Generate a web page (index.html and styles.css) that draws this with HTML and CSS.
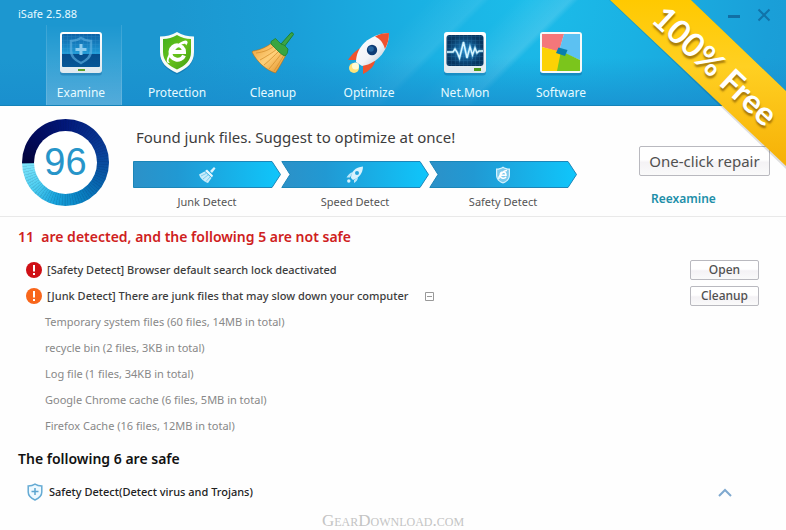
FILE: index.html
```html
<!DOCTYPE html>
<html lang="en">
<head>
<meta charset="utf-8">
<title>iSafe 2.5.88</title>
<link rel="stylesheet" href="styles.css">
</head>
<body>
<svg width="0" height="0" class="defs" aria-hidden="true">
  <defs>
    <linearGradient id="green" x1="0" y1="0" x2="1" y2="1"><stop offset="0" stop-color="#3fae1c"/><stop offset=".5" stop-color="#67c21a"/><stop offset="1" stop-color="#3f9d12"/></linearGradient>
    <linearGradient id="screen" x1="0" y1="0" x2="0" y2="1"><stop offset="0" stop-color="#0c62a6"/><stop offset=".6" stop-color="#1f9ad6"/><stop offset=".61" stop-color="#064d8c"/><stop offset="1" stop-color="#075796"/></linearGradient>
    <radialGradient id="monitor"><stop offset="0" stop-color="#1d7fc0"/><stop offset="1" stop-color="#06355f"/></radialGradient>
    <linearGradient id="frame" x1="0" y1="0" x2="0" y2="1"><stop offset="0" stop-color="#fff"/><stop offset="1" stop-color="#dfe9ef"/></linearGradient>
    <linearGradient id="straw" x1="0" y1="0" x2="1" y2="1"><stop offset="0" stop-color="#e89a30"/><stop offset=".5" stop-color="#ffd07a"/><stop offset="1" stop-color="#e08a1c"/></linearGradient>
    <linearGradient id="hull" x1="0" y1="0" x2="1" y2="1"><stop offset="0" stop-color="#fff"/><stop offset=".55" stop-color="#f2f4f8"/><stop offset="1" stop-color="#a9bccd"/></linearGradient>
    <linearGradient id="gold" x1="0" y1="0" x2="0" y2="1"><stop offset="0" stop-color="#ffc900"/><stop offset=".4" stop-color="#ffd022"/><stop offset="1" stop-color="#f6b006"/></linearGradient>
    <pattern id="grid" width="4" height="4" patternUnits="userSpaceOnUse"><path d="M0 .5H4M.5 0V4" stroke="#5ab4e6" stroke-width=".5" opacity=".5"/></pattern>
  </defs>
</svg>

<header class="header">
  <div class="titlebar">
    <h1 class="app-name">iSafe 2.5.88</h1>
    <div class="window-buttons">
      <button type="button" aria-label="Minimize"><svg width="14" height="14"><path d="M1 8.500H13" stroke="#116fa5" stroke-width="3"/></svg></button>
      <button type="button" aria-label="Close"><svg width="14" height="14"><path d="M1.500 1.500L12.500 12.500M12.500 1.500L1.500 12.500" stroke="#1173a9" stroke-width="2"/></svg></button>
    </div>
  </div>
  <nav class="tabs">
    <a href="#" class="tab active">
      <svg class="tab-icon" viewBox="0 0 44 44"><rect x="1" y="1.500" width="42" height="42" rx="3" fill="#0a5c96" opacity=".35"/><rect x="1" y="0" width="42" height="41" rx="3" fill="url(#frame)"/><rect x="3" y="2" width="38" height="33" rx="1" fill="url(#screen)"/><rect x="3" y="2" width="38" height="20" fill="url(#grid)" opacity=".5"/><path d="M22 6C25 8 28 9 32 9V18C32 25 28 28 22 31C16 28 12 25 12 18V9C16 9 19 8 22 6Z" fill="none" stroke="#5fb0e0" stroke-width="2.500" opacity=".65"/><path d="M22 12V23M16.500 17.500H27.500" stroke="#8bcbee" stroke-width="3"/><rect x="19" y="37" width="7" height="2" fill="#5aa02c"/></svg>
      <span>Examine</span></a>
    <a href="#" class="tab">
      <svg class="tab-icon" viewBox="0 0 44 44"><path d="M22 1.500C27 4.500 33 6 39 6V21C39 32 32 38 22 42.500C12 38 5 32 5 21V6C11 6 17 4.500 22 1.500Z" fill="#0a5c96" opacity=".4"/><path d="M22 0C27 3 33 4.500 39 4.500V20C39 31 32 36.500 22 41C12 36.500 5 31 5 20V4.500C11 4.500 17 3 22 0Z" fill="#f7fbf8"/><path d="M22 3C26.500 5.500 31 7 36 7V20C36 29 30 34 22 37.500C14 34 8 29 8 20V7C13 7 17.500 5.500 22 3Z" fill="url(#green)"/><path d="M15 20H29C29 11.500 16.500 11 15.500 19.500C14.500 29 26.500 30 29 23.500" fill="none" stroke="#fff" stroke-width="4"/><path d="M15 31C10 32 11 25 17 18S30 7 32 9C33.500 10.500 32 12 31 13.500C31 9.500 24 13 18.500 20S12.500 29 15 31Z" fill="#fff"/></svg>
      <span>Protection</span></a>
    <a href="#" class="tab">
      <svg class="tab-icon" viewBox="0 0 44 44"><path d="M30 12L40 .8Q42 0 42.500 2.500L33 15Z" fill="#3ba546" stroke="#1f8130" stroke-width="1"/><path d="M2 19C9 18 16 15 22 10L35 23C31 30 28 36 24.500 41C15 38 6 30 1 20Z" fill="url(#straw)" stroke="#b86f14" stroke-width=".6"/><path d="M5 21C13 20 18 18 23 14M9 28C16 24 21 21 26 17M13 33C19 28 23 24 28 19M18 37C23 31 27 26 31 21M23 39C27 33 30 28 33 23" fill="none" stroke="#d18c2a" stroke-width=".7"/><path d="M20 9.500L24.500 6.500Q28 10 30 12L33 13L37 17Q37 22 34 24Q31 23 28 20L20 12Z" fill="#39a541" stroke="#1f8130" stroke-width=".8"/></svg>
      <span>Cleanup</span></a>
    <a href="#" class="tab">
      <svg class="tab-icon" viewBox="0 0 44 44"><path d="M16 15C10 17 5 22 1 28L11 28Z" fill="#f0532e"/><path d="M16 32L28 28C28 34 22 39 16 42Z" fill="#f0532e"/><circle cx="7" cy="36" r="5" fill="#ffe37a"/><circle cx="8.500" cy="34" r="3.500" fill="#fffbd6"/><path d="M9 30C9 15 22 2 42 1C42 17 32 31 15 34Z" fill="url(#hull)"/><path d="M28 4.500C32 2 37 1 42 1C42 7 41 11 38 17C36 10 33 7 28 4.500Z" fill="#ee512f"/><circle cx="25" cy="18" r="5.200" fill="#0d3c76"/><circle cx="24" cy="17" r="2.800" fill="#2465a0"/></svg>
      <span>Optimize</span></a>
    <a href="#" class="tab">
      <svg class="tab-icon" viewBox="0 0 44 44"><rect x="1" y="1.500" width="42" height="42" rx="3" fill="#0a5c96" opacity=".35"/><rect x="1" y="0" width="42" height="41" rx="3" fill="url(#frame)"/><rect x="3.500" y="3" width="37" height="31" rx="3" fill="url(#monitor)"/><rect x="3.500" y="3" width="37" height="31" rx="3" fill="url(#grid)" opacity=".5"/><path d="M4 20H10L12 17L14 20L16.500 26L20.500 10L24 26L27 15L29.500 23L32 16L34 21L36 19H40" fill="none" stroke="#7fd9ff" stroke-width="3" opacity=".4"/><path d="M4 20H10L12 17L14 20L16.500 26L20.500 10L24 26L27 15L29.500 23L32 16L34 21L36 19H40" fill="none" stroke="#d8f6ff" stroke-width="1.500"/><rect x="31" y="36" width="7" height="3" fill="#4f9a1d"/></svg>
      <span>Net.Mon</span></a>
    <a href="#" class="tab">
      <svg class="tab-icon" viewBox="0 0 44 44"><rect x="1" y="1.500" width="42" height="42" rx="3" fill="#0a5c96" opacity=".4"/><rect x="1" y="0" width="42" height="41" rx="3" fill="#f6faf9"/><path d="M3 2H25L20 20L3 15Z" fill="#f4777a"/><path d="M25 2H41V28L20 19Z" fill="#5cc1f2"/><path d="M3 15L23 20L19 39H3Z" fill="#fcd205"/><path d="M41 28L22 19L18 39H41Z" fill="#7bc51c"/><path d="M19.500 15.500L28.500 18L26 24L17 21Z" fill="#087fae"/></svg>
      <span>Software</span></a>
  </nav>
</header>

<main>
  <section class="summary">
    <div class="score"><span>96</span></div>
    <div class="status">
      <h2 class="status-title">Found junk files. Suggest to optimize at once!</h2>
      <ol class="steps">
        <li><svg class="arrow" viewBox="0 0 148 27" preserveAspectRatio="none"><defs><linearGradient id="bar"><stop offset="0" stop-color="#2c91c8"/><stop offset=".3" stop-color="#2199d3"/><stop offset="1" stop-color="#0fc6fb"/></linearGradient></defs><path d="M.5.5H139L147.500 13.500L139 26.500H.5Z" fill="url(#bar)" stroke="#1c86b8"/></svg>
          <svg class="step-icon" viewBox="0 0 18 18"><path d="M12 5L16 1L17.500 2.500L14 7Z" fill="#d9f2fd"/><path d="M9 3.500L15 9.500L14 11.500L7 5Z" fill="#e5f7ff"/><path d="M6.500 5.500L13.500 12L10 17C6 16 2 12 1 8.500Z" fill="#c8ecfb"/><path d="M3 10L8 7.500M5 13L10 9M8 15.500L12 11" stroke="#5fbfe8" stroke-width=".7"/></svg>
          <span>Junk Detect</span></li>
        <li><svg class="arrow" viewBox="0 0 148 27" preserveAspectRatio="none"><path d="M.8.5H139L147.500 13.500L139 26.500H.8L9 13.500Z" fill="url(#bar)" stroke="#1c86b8"/></svg>
          <svg class="step-icon" viewBox="0 0 18 18"><path d="M5 12C5 6 9 1 17 .5C17 7 13 12 7 14Z" fill="#d9f2fd"/><path d="M7 6C4 6.500 2 9 .5 11.500L4 11.500ZM12 11L8 14V17C10 16 12 14 12 11Z" fill="#bde8fa"/><circle cx="2.800" cy="15" r="1.700" fill="#d9f2fd"/><circle cx="11" cy="7" r="2" fill="#29a6dc"/></svg>
          <span>Speed Detect</span></li>
        <li><svg class="arrow" viewBox="0 0 148 27" preserveAspectRatio="none"><path d="M.8.5H139L147.500 13.500L139 26.500H.8L9 13.500Z" fill="url(#bar)" stroke="#1c86b8"/></svg>
          <svg class="step-icon" viewBox="0 0 18 18"><path d="M9 .5C11 2 13 2.500 16 2.500V9C16 13.500 13 16 9 17.500C5 16 2 13.500 2 9V2.500C5 2.500 7 2 9 .5Z" fill="#d5f1fd"/><path d="M9 2C11 3.200 13 3.800 14.800 3.800V9C14.800 12.800 12.500 15 9 16.300C5.500 15 3.200 12.800 3.200 9V3.800C5 3.800 7 3.200 9 2Z" fill="#7ccaec"/><path d="M6.500 9.200H12C12 5 6.300 5 6.200 9C6.200 13 11 13 12 10.800M5 13C4 10 10 4 13 4.500" fill="none" stroke="#fff" stroke-width="1.500"/></svg>
          <span>Safety Detect</span></li>
      </ol>
    </div>
    <div class="actions">
      <button type="button" class="btn btn-large">One-click repair</button>
      <a href="#" class="reexamine">Reexamine</a>
    </div>
  </section>

  <section class="results">
    <h2 class="heading danger">11&nbsp; are detected, and the following 5 are not safe</h2>
    <div class="row">
      <svg class="alert" viewBox="0 0 16 16"><circle cx="8" cy="8" r="8" fill="#cf1016"/><path d="M8 3V9.500M8 11V13" stroke="#fff" stroke-width="2"/></svg>
      <span>[Safety Detect] Browser default search lock deactivated</span>
      <button type="button" class="btn btn-small">Open</button>
    </div>
    <div class="row">
      <svg class="alert" viewBox="0 0 16 16"><circle cx="8" cy="8" r="8" fill="#f8661b"/><path d="M8 3V9.500M8 11V13" stroke="#fff" stroke-width="2"/></svg>
      <span>[Junk Detect] There are junk files that may slow down your computer</span>
      <button type="button" class="collapse" aria-label="Collapse"><svg width="9" height="9"><path d="M.5.5H8.500V8.500H.5ZM2 4.500H7" fill="none" stroke="#999"/></svg></button>
      <button type="button" class="btn btn-small">Cleanup</button>
    </div>
    <ul class="details">
      <li>Temporary system files (60 files, 14MB in total)</li>
      <li>recycle bin (2 files, 3KB in total)</li>
      <li>Log file (1 files, 34KB in total)</li>
      <li>Google Chrome cache (6 files, 5MB in total)</li>
      <li>Firefox Cache (16 files, 12MB in total)</li>
    </ul>
    <h2 class="heading">The following 6 are safe</h2>
    <div class="row safe">
      <svg class="shield" viewBox="0 0 16 18"><path d="M8 1.200C10 2.500 12.500 3 14.800 3V9C14.800 13 12 15.200 8 17C4 15.200 1.200 13 1.200 9V3C3.500 3 6 2.500 8 1.200Z" fill="#eef9ff" stroke="#65abd4" stroke-width="1.500"/><path d="M8 5V12M4.500 8.500H11.500" stroke="#5ba5d0" stroke-width="1.500"/></svg>
      <span>Safety Detect(Detect virus and Trojans)</span>
      <button type="button" class="expand" aria-label="Collapse group"><svg width="14" height="9"><path d="M1 8L7 2L13 8" fill="none" stroke="#7fa9cf" stroke-width="2"/></svg></button>
    </div>
  </section>
</main>
<footer class="watermark">GearDownload.com</footer>

<svg class="ribbon" viewBox="0 0 190 180" width="190" height="180">
  <path d="M13 0H95L190 91V169Z" fill="#000" opacity=".12"/>
  <path d="M14 0H95L190 91V166Z" fill="url(#gold)"/>
  <text x="54" y="21" transform="rotate(43 54 21)" class="ribbon-text">100% Free</text>
</svg>
</body>
</html>
```
FILE: styles.css
```css
* { box-sizing: border-box; }

body {
  margin: 0;
  min-height: 100vh;
  position: relative;
  display: flex;
  flex-direction: column;
  background: #fefefe;
  color: #3c3c3c;
  font: 11px/26px "Noto Sans", "Open Sans", sans-serif;
}

h1, h2, ol, ul { margin: 0; padding: 0; font: inherit; list-style: none; }
a { text-decoration: none; color: inherit; }
button { font: inherit; color: inherit; padding: 0; border: 0; background: none; }
svg { display: block; flex: none; }
.defs { position: absolute; }

.header {
  color: #e6faff;
  padding: 4px 15px 0 18px;
  border-bottom: 1px solid #1583b9;
  background:
    linear-gradient(180deg, transparent 55%, rgba(25, 140, 205, .7)),
    linear-gradient(135deg, transparent 58%, rgba(255, 255, 255, .14) 64%, transparent 65%),
    linear-gradient(135deg, transparent 48%, rgba(255, 255, 255, .08) 54%, transparent 55%),
    radial-gradient(circle at 530px 0, #1cbdea 0, #1ab1e3 110px, #1a9fd8 240px, #1c97d0 360px);
}

.titlebar { display: flex; justify-content: space-between; height: 21px; }
.app-name { line-height: 20px; }
.window-buttons { display: flex; gap: 16px; align-items: center; }

.tabs { display: flex; gap: 20px; padding-left: 28px; }
.tab {
  width: 76px;
  height: 80px;
  padding: 7px 6px 0 0;
  display: flex;
  flex-direction: column;
  align-items: center;
  gap: 7px;
  font-size: 12px;
  line-height: 20px;
  white-space: nowrap;
}
.tab.active {
  background: linear-gradient(rgba(255, 255, 255, 0), rgba(255, 255, 255, .25));
  box-shadow: inset 1px 0 rgba(255, 255, 255, .12), inset -1px 0 rgba(255, 255, 255, .12);
}
.tab-icon { width: 44px; height: 44px; }

.summary {
  display: flex;
  align-items: flex-start;
  height: 111px;
  padding: 13px 16px 0 22px;
  border-bottom: 1px solid #e9e9e9;
}
.score {
  flex: none;
  width: 87px;
  height: 87px;
  padding: 12px;
  border-radius: 50%;
  background:
    repeating-conic-gradient(rgba(0, 20, 60, .1) 0 1deg, transparent 2deg 4deg),
    conic-gradient(#02187a 0, #0a3c96 70deg, #0759a6 110deg, #0a84c4 160deg, #18a3dc 195deg, #4ccdf0 230deg, #7de4fb 268deg, #03043c 270deg, #020a5c 310deg, #02187a);
}
.score span {
  display: block;
  height: 100%;
  border-radius: 50%;
  background: #fff;
  color: #2795c9;
  font: 38px/63px "Liberation Sans", Arial, sans-serif;
  text-align: center;
}
.status { padding-left: 24px; }
.status-title { padding-left: 3px; font-size: 15px; line-height: 36px; white-space: nowrap; }
.steps { display: flex; margin-top: 6px; }
.steps li {
  width: 148px;
  display: grid;
  justify-items: center;
  grid-template-rows: 27px 28px;
  align-items: center;
  color: #555;
}
.arrow, .step-icon { grid-area: 1 / 1; }
.arrow { width: 148px; height: 27px; }
.step-icon { width: 18px; height: 18px; }

.actions {
  margin-left: auto;
  padding-top: 27px;
  display: flex;
  flex-direction: column;
}
.btn {
  border: 1px solid #b9b9bf;
  border-radius: 2px;
  background: linear-gradient(#fff 45%, #f4f2f5 55%, #fafafa);
  color: #505050;
}
.btn-large { width: 131px; height: 30px; font-size: 15px; line-height: 26px; }
.reexamine { padding: 10px 0 0 12px; color: #218fa9; font-size: 12px; font-weight: 600; }

.results { padding: 7px 27px 0 18px; }
.heading { font-size: 14px; font-weight: 600; color: #111; }
.heading.danger { color: #cf2020; margin-bottom: 7px; }
.row { display: flex; align-items: center; padding-left: 8px; height: 26px; font-weight: 500; }
.alert { width: 16px; height: 16px; margin-right: 5px; }
.collapse { margin-left: 17px; }
.btn-small { width: 69px; height: 20px; font-size: 12px; line-height: 18px; font-weight: 500; margin-left: auto; }
.details { padding-left: 27px; margin-bottom: 7px; color: #888; }
.safe { height: 40px; color: #222; }
.shield { width: 18px; height: 18px; margin-right: 5px; }
.expand { margin-left: auto; margin-right: 27px; }

.watermark {
  margin-top: auto;
  color: #c4c4c4;
  text-align: center;
  font: 17px/18px "Liberation Serif", serif;
  font-variant: small-caps;
}

.ribbon { position: absolute; top: 0; right: 0; pointer-events: none; }
.ribbon-text {
  font: 700 33px Lato, sans-serif;
  fill: #fff;
  text-shadow: 2px 2px 2px rgba(110, 70, 0, .6);
}
```
